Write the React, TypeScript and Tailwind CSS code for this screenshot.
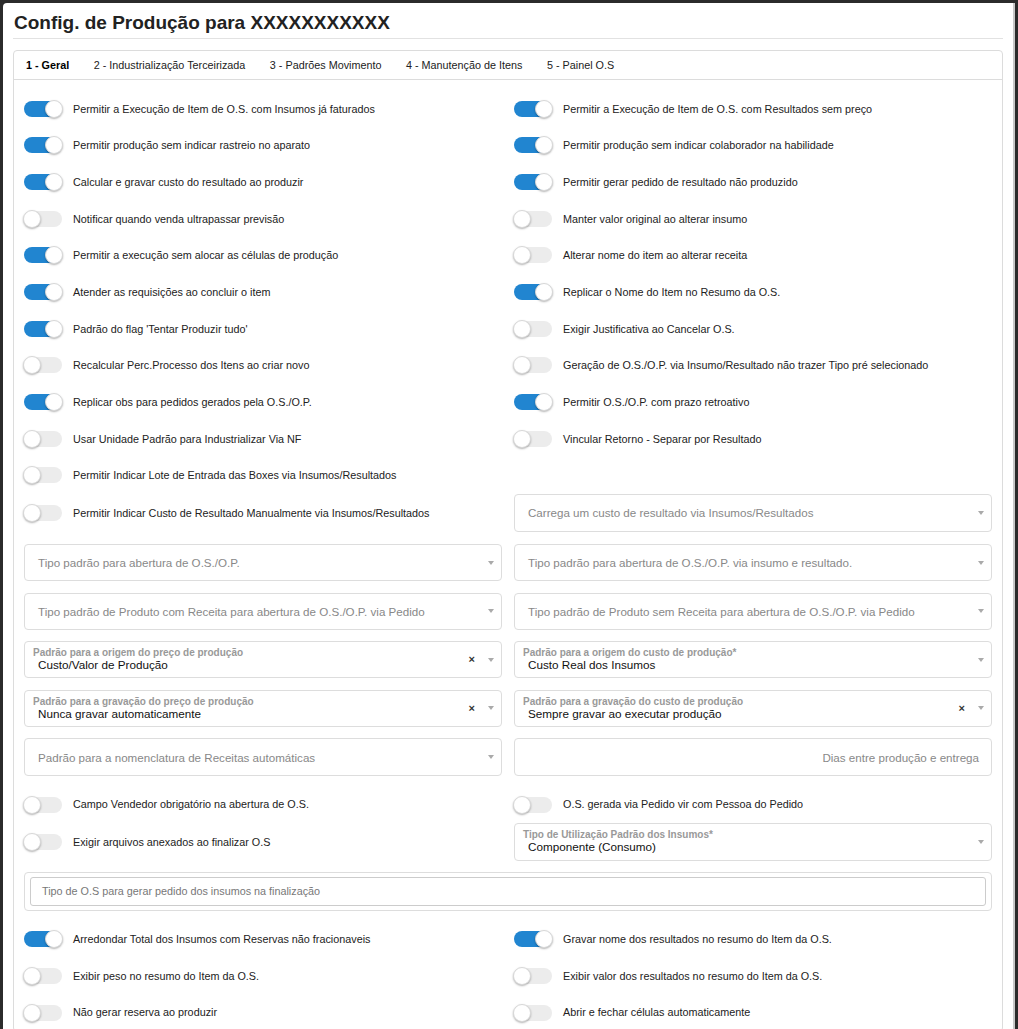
const FONT = { fontFamily: '"Liberation Sans", Arial, sans-serif' };

type Row = [boolean, string];

const TOP_ROWS: [Row, Row | null][] = [
  [[true, 'Permitir a Execução de Item de O.S. com Insumos já faturados'], [true, 'Permitir a Execução de Item de O.S. com Resultados sem preço']],
  [[true, 'Permitir produção sem indicar rastreio no aparato'], [true, 'Permitir produção sem indicar colaborador na habilidade']],
  [[true, 'Calcular e gravar custo do resultado ao produzir'], [true, 'Permitir gerar pedido de resultado não produzido']],
  [[false, 'Notificar quando venda ultrapassar previsão'], [false, 'Manter valor original ao alterar insumo']],
  [[true, 'Permitir a execução sem alocar as células de produção'], [false, 'Alterar nome do item ao alterar receita']],
  [[true, 'Atender as requisições ao concluir o item'], [true, 'Replicar o Nome do Item no Resumo da O.S.']],
  [[true, "Padrão do flag 'Tentar Produzir tudo'"], [false, 'Exigir Justificativa ao Cancelar O.S.']],
  [[false, 'Recalcular Perc.Processo dos Itens ao criar novo'], [false, 'Geração de O.S./O.P. via Insumo/Resultado não trazer Tipo pré selecionado']],
  [[true, 'Replicar obs para pedidos gerados pela O.S./O.P.'], [true, 'Permitir O.S./O.P. com prazo retroativo']],
  [[false, 'Usar Unidade Padrão para Industrializar Via NF'], [false, 'Vincular Retorno - Separar por Resultado']],
  [[false, 'Permitir Indicar Lote de Entrada das Boxes via Insumos/Resultados'], null],
];

const BOTTOM_ROWS: [Row, Row][] = [
  [[true, 'Arredondar Total dos Insumos com Reservas não fracionaveis'], [true, 'Gravar nome dos resultados no resumo do Item da O.S.']],
  [[false, 'Exibir peso no resumo do Item da O.S.'], [false, 'Exibir valor dos resultados no resumo do Item da O.S.']],
  [[false, 'Não gerar reserva ao produzir'], [false, 'Abrir e fechar células automaticamente']],
];

const TABS = ['1 - Geral', '2 - Industrialização Terceirizada', '3 - Padrões Movimento', '4 - Manutenção de Itens', '5 - Painel O.S'];

function Toggle({ on }: { on: boolean }) {
  return (
    <div className={`relative h-[16px] w-[38px] shrink-0 rounded-full ${on ? 'bg-[#2185d0]' : 'bg-[#ececec]'}`}>
      <div
        className={`absolute top-[-1px] h-[18px] w-[18px] rounded-full border border-[#d8d8d8] bg-white shadow-[0_1px_2px_rgba(0,0,0,0.3)] ${
          on ? 'right-[-1px]' : 'left-[-1px]'
        }`}
      />
    </div>
  );
}

function ToggleRow({ row, tall }: { row: Row | null; tall?: boolean }) {
  if (!row) return <div />;
  return (
    <div className={`flex items-center gap-[11px] ${tall ? 'h-[38px]' : 'h-[36.67px]'}`}>
      <Toggle on={row[0]} />
      <span className="text-[10.8px] text-[#222]">{row[1]}</span>
    </div>
  );
}

function Caret() {
  return <span className="h-0 w-0 border-x-[3.5px] border-t-[4px] border-x-transparent border-t-[#aaa]" />;
}

function Select({ placeholder, label, value, clear, h = 'h-[37px]' }: { placeholder?: string; label?: string; value?: string; clear?: boolean; h?: string }) {
  return (
    <div className={`flex ${h} items-center rounded-[4px] border border-[#ddd] bg-white pr-[7px]`}>
      <div className="flex-1 overflow-hidden">
        {label ? (
          <div className="pl-[8px]">
            <div className="text-[10px] font-bold leading-[11px] text-[#999]">{label}</div>
            <div className="pl-[5px] text-[11.7px] leading-[14px] text-[#111]">{value}</div>
          </div>
        ) : (
          <div className="pl-[13px] text-[11.6px] text-[#888]">{placeholder}</div>
        )}
      </div>
      {clear && <span className="mr-[13px] text-[11px] font-bold leading-none text-[#333]">×</span>}
      <Caret />
    </div>
  );
}

export default function App() {
  return (
    <div className="h-[1029px] overflow-hidden bg-[#2b2b2b] pl-[3px] pt-[3px]" style={FONT}>
      <div className="h-full w-[1012px] rounded-tl-[4px] border-r-2 border-[#c8c8c8] bg-white px-[10px]">
        <h1 className="pt-[9px] pl-[1px] text-[19px] font-bold leading-[22px] text-[#222]">Config. de Produção para XXXXXXXXXXX</h1>
        <div className="mt-[4px] h-px bg-[#e2e2e2]" />

        <div className="mt-[11px] rounded-[4px] border border-[#dcdcdc]">
          <div className="flex h-[29px] items-center gap-[24.5px] border-b border-[#dcdcdc] pl-[12px] text-[10.8px] text-[#222]">
            {TABS.map((t, i) => (
              <span key={t} className={i === 0 ? 'font-bold text-black' : ''}>
                {t}
              </span>
            ))}
          </div>

          <div className="px-[10px] pt-[10.5px]">
            <div className="grid grid-cols-2 gap-x-[12px]">
              {TOP_ROWS.map(([l, r], i) => (
                <div key={i} className="contents">
                  <ToggleRow row={l} />
                  <ToggleRow row={r} />
                </div>
              ))}
              <ToggleRow row={[false, 'Permitir Indicar Custo de Resultado Manualmente via Insumos/Resultados']} tall />
              <Select placeholder="Carrega um custo de resultado via Insumos/Resultados" h="h-[38px]" />
            </div>

            <div className="mt-[12.5px] grid grid-cols-2 gap-x-[12px] gap-y-[11.5px]">
              <Select placeholder="Tipo padrão para abertura de O.S./O.P." />
              <Select placeholder="Tipo padrão para abertura de O.S./O.P. via insumo e resultado." />
              <Select placeholder="Tipo padrão de Produto com Receita para abertura de O.S./O.P. via Pedido" />
              <Select placeholder="Tipo padrão de Produto sem Receita para abertura de O.S./O.P. via Pedido" />
              <Select label="Padrão para a origem do preço de produção" value="Custo/Valor de Produção" clear />
              <Select label="Padrão para a origem do custo de produção*" value="Custo Real dos Insumos" />
              <Select label="Padrão para a gravação do preço de produção" value="Nunca gravar automaticamente" clear />
              <Select label="Padrão para a gravação do custo de produção" value="Sempre gravar ao executar produção" clear />
              <Select placeholder="Padrão para a nomenclatura de Receitas automáticas" h="h-[38px]" />
              <div className="flex h-[38px] items-center justify-end rounded-[4px] border border-[#ddd] pr-[12px] text-[11.6px] text-[#888]">
                Dias entre produção e entrega
              </div>
            </div>

            <div className="mt-[10px] grid grid-cols-2 gap-x-[12px]">
              <ToggleRow row={[false, 'Campo Vendedor obrigatório na abertura de O.S.']} />
              <ToggleRow row={[false, 'O.S. gerada via Pedido vir com Pessoa do Pedido']} />
              <ToggleRow row={[false, 'Exigir arquivos anexados ao finalizar O.S']} tall />
              <Select label="Tipo de Utilização Padrão dos Insumos*" value="Componente (Consumo)" h="h-[38px]" />
            </div>

            <div className="mt-[11px] rounded-[4px] border border-[#ddd] px-[5px] py-[4px]">
              <div className="flex h-[29px] items-center rounded-[3px] border border-[#ccc] pl-[11px] text-[10.8px] text-[#777]">
                Tipo de O.S para gerar pedido dos insumos na finalização
              </div>
            </div>

            <div className="mt-[10px] grid grid-cols-2 gap-x-[12px]">
              {BOTTOM_ROWS.map(([l, r], i) => (
                <div key={i} className="contents">
                  <ToggleRow row={l} />
                  <ToggleRow row={r} />
                </div>
              ))}
            </div>
          </div>
        </div>
      </div>
    </div>
  );
}
